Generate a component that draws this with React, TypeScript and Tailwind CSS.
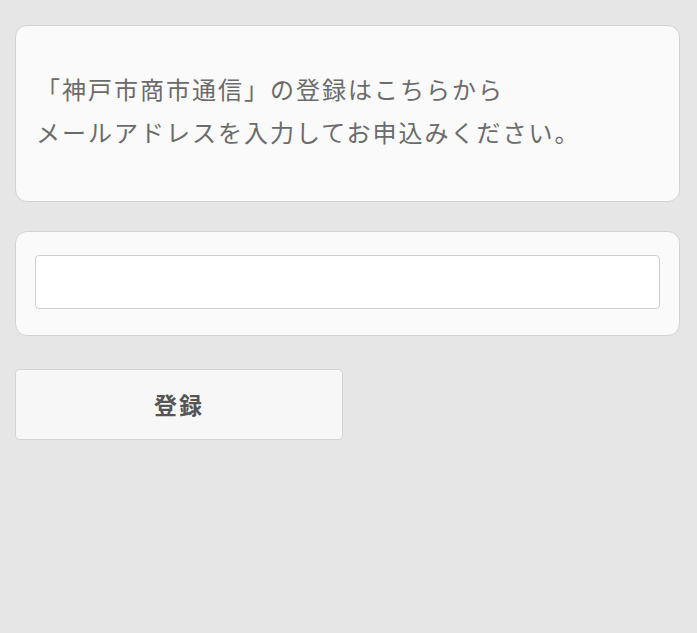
export default function App() {
  return (
    <div
      className="min-h-[633px] bg-[#e6e6e6] pl-[15px] pr-[17px] pt-[25px] text-[#666]"
      style={{ fontFamily: '"Noto Sans CJK JP", "Noto Sans", sans-serif' }}
    >
      <div className="rounded-[12px] border border-[#d2d2d2] bg-[#fafafa] px-[20px] pt-[41px] pb-[48px]">
        <p className="text-[24px] leading-[43px] tracking-[2px] text-[#6b6b6b]">
          「神戸市商市通信」の登録はこちらから
          <br />
          メールアドレスを入力してお申込みください。
        </p>
      </div>

      <div className="mt-[29px] rounded-[12px] border border-[#d2d2d2] bg-[#fafafa] px-[19px] pt-[23px] pb-[26px]">
        <input
          type="email"
          className="block h-[54px] w-full rounded-[4px] border border-[#cfcfcf] bg-white px-3 text-[18px] outline-none"
        />
      </div>

      <button
        type="button"
        className="mt-[33px] flex h-[71px] w-[328px] items-center justify-center rounded-[4px] border border-[#d4d4d4] bg-[#f7f7f7] text-[23px] font-bold tracking-[2px] text-[#555]"
      >
        登録
      </button>
    </div>
  )
}
